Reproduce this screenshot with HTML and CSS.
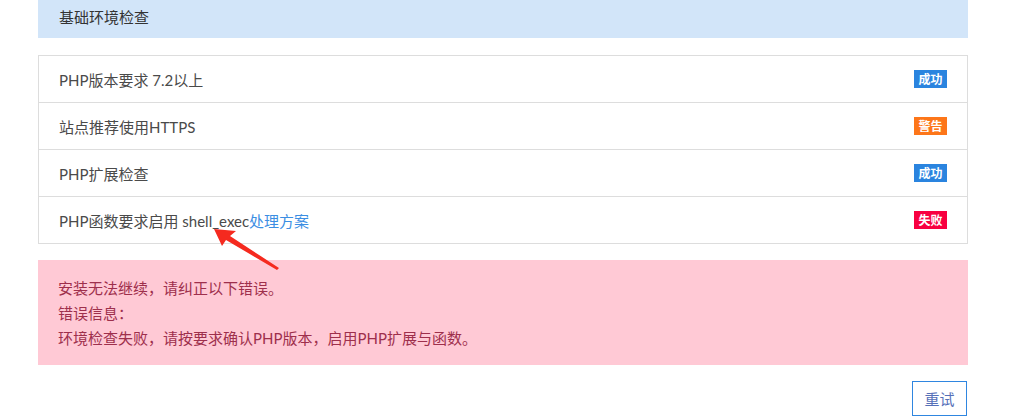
FILE: index.html
```html
<!DOCTYPE html>
<html lang="zh-CN">
<head>
<meta charset="utf-8">
<title>基础环境检查</title>
<link rel="stylesheet" href="styles.css">
</head>
<body>
<div class="page">
  <div class="panel-head">基础环境检查</div>
  <ul class="checks">
    <li class="check"><span>PHP版本要求 7.2以上</span><span class="badge ok">成功</span></li>
    <li class="check"><span>站点推荐使用HTTPS</span><span class="badge warn">警告</span></li>
    <li class="check"><span>PHP扩展检查</span><span class="badge ok">成功</span></li>
    <li class="check"><span>PHP函数要求启用 shell_exec<a class="link" href="#">处理方案</a></span><span class="badge fail">失败</span></li>
  </ul>
  <div class="alert">
    <p>安装无法继续，请纠正以下错误。</p>
    <p>错误信息：</p>
    <p>环境检查失败，请按要求确认PHP版本，启用PHP扩展与函数。</p>
  </div>
  <div class="actions"><button class="btn">重试</button></div>
</div>
<svg class="arrow" width="80" height="50" viewBox="200 222 80 50" xmlns="http://www.w3.org/2000/svg">
  <polygon points="214,229 236,231 230,236 279,268 277,270 226,240 222,246" fill="#f52a1f"/>
</svg>
</body>
</html>
```

FILE: styles.css
```css
html, body {
  margin: 0;
  padding: 0;
  background: #fff;
}
body {
  font-family: "Lato", "Noto Sans CJK SC", sans-serif;
  font-size: 15px;
  color: #4a4a4a;
  position: relative;
}
.page {
  width: 930px;
  margin-left: 38px;
}
.panel-head {
  background: #d2e5f9;
  padding: 6px 21px 10px;
  line-height: 22px;
  color: #333;
}
.checks {
  list-style: none;
  margin: 17px 0 0;
  padding: 0;
  border: 1px solid #dddddd;
}
.check {
  display: flex;
  align-items: center;
  justify-content: space-between;
  height: 46px;
  padding: 0 20px;
  border-top: 1px solid #dddddd;
}
.check:first-child {
  border-top: none;
}
.link {
  color: #3b8ee3;
  text-decoration: none;
}
.badge {
  display: inline-flex;
  align-items: center;
  justify-content: center;
  width: 33px;
  height: 18px;
  font-family: "Noto Sans CJK SC", sans-serif;
  font-size: 12px;
  font-weight: bold;
  color: #fff;
  line-height: 18px;
}
.ok { background: #2a84df; }
.warn { background: #fd7619; }
.fail { background: #f80040; }
.alert {
  margin-top: 16px;
  background: #ffc9d5;
  padding: 16px 20px 14px;
  color: #9e2f4c;
}
.alert p {
  margin: 0;
  line-height: 25px;
}
.actions {
  display: flex;
  justify-content: flex-end;
  margin-top: 16px;
  padding-right: 1px;
}
.btn {
  width: 55px;
  height: 35px;
  border: 1px solid #2f86e0;
  background: #fff;
  color: #5670b8;
  font-family: "Noto Sans CJK SC", sans-serif;
  font-size: 15px;
  padding: 0;
}
.arrow {
  position: absolute;
  left: 200px;
  top: 222px;
}
```
